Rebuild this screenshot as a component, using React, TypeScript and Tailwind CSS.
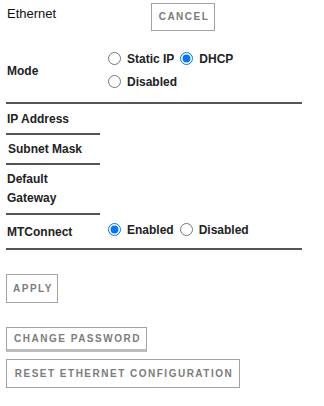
import { useState } from "react";

const btn =
  "bg-white border border-[#a3a3a3] text-[#7c7c7c] font-bold text-[10px] tracking-[1.5px] uppercase leading-none";

function Radio({
  name,
  label,
  checked,
  onChange,
}: {
  name: string;
  label: string;
  checked: boolean;
  onChange: () => void;
}) {
  return (
    <label className="flex items-center h-[23px] mr-[6px]">
      <input
        type="radio"
        name={name}
        checked={checked}
        onChange={onChange}
        className="w-[13px] h-[13px] m-0 mr-[6px] accent-[#0075ff]"
      />
      <span className="font-bold text-[12px] text-[#222]">{label}</span>
    </label>
  );
}

export default function App() {
  const [mode, setMode] = useState("dhcp");
  const [mt, setMt] = useState("enabled");

  return (
    <div
      className="w-[324px] h-[406px] bg-white text-[#222]"
      style={{ fontFamily: '"Liberation Sans", Arial, sans-serif' }}
    >
      <div className="ml-[6px] w-[296px]">
        {/* header */}
        <div className="flex h-[40px]">
          <div className="w-[145px] pl-[1px] pt-[4px] text-[13px] text-[#111]">Ethernet</div>
          <button className={`${btn} mt-[3px] w-[64px] h-[28px] pl-[2px]`}>Cancel</button>
        </div>

        {/* mode */}
        <div className="flex h-[64px] border-b-2 border-[#555]">
          <div className="w-[102px] pl-[1px] self-center font-bold text-[12px]">Mode</div>
          <div className="pt-[7px]">
            <div className="flex">
              <Radio name="mode" label="Static IP" checked={mode === "static"} onChange={() => setMode("static")} />
              <Radio name="mode" label="DHCP" checked={mode === "dhcp"} onChange={() => setMode("dhcp")} />
            </div>
            <Radio name="mode" label="Disabled" checked={mode === "disabled"} onChange={() => setMode("disabled")} />
          </div>
        </div>

        <div className="w-[94px] h-[31px] border-b-2 border-[#555] flex items-center pl-[1px] font-bold text-[12px]">
          IP Address
        </div>
        <div className="w-[94px] h-[30px] border-b-2 border-[#555] flex items-center pl-[2px] font-bold text-[12px]">
          Subnet Mask
        </div>
        <div className="w-[94px] h-[50px] border-b-2 border-[#555] flex flex-col justify-center pl-[1px] font-bold text-[12px] leading-[19px]">
          <span>Default</span>
          <span>Gateway</span>
        </div>

        {/* mtconnect */}
        <div className="flex items-center h-[35px] border-b-2 border-[#555]">
          <div className="w-[102px] pl-[1px] font-bold text-[12px]">MTConnect</div>
          <div className="flex pb-[4px]">
            <Radio name="mt" label="Enabled" checked={mt === "enabled"} onChange={() => setMt("enabled")} />
            <Radio name="mt" label="Disabled" checked={mt === "disabled"} onChange={() => setMt("disabled")} />
          </div>
        </div>

        <div className="flex flex-col items-start">
          <button className={`${btn} mt-[24px] w-[52px] h-[29px] pl-[2px]`}>Apply</button>
          <button className={`${btn} mt-[24px] w-[141px] h-[25px] pl-[2px] border-b-[3px] border-b-[#bdbdbd]`}>
            Change Password
          </button>
          <button className={`${btn} mt-[7px] w-[234px] h-[29px] pl-[2px]`}>
            Reset Ethernet Configuration
          </button>
        </div>
      </div>
    </div>
  );
}
